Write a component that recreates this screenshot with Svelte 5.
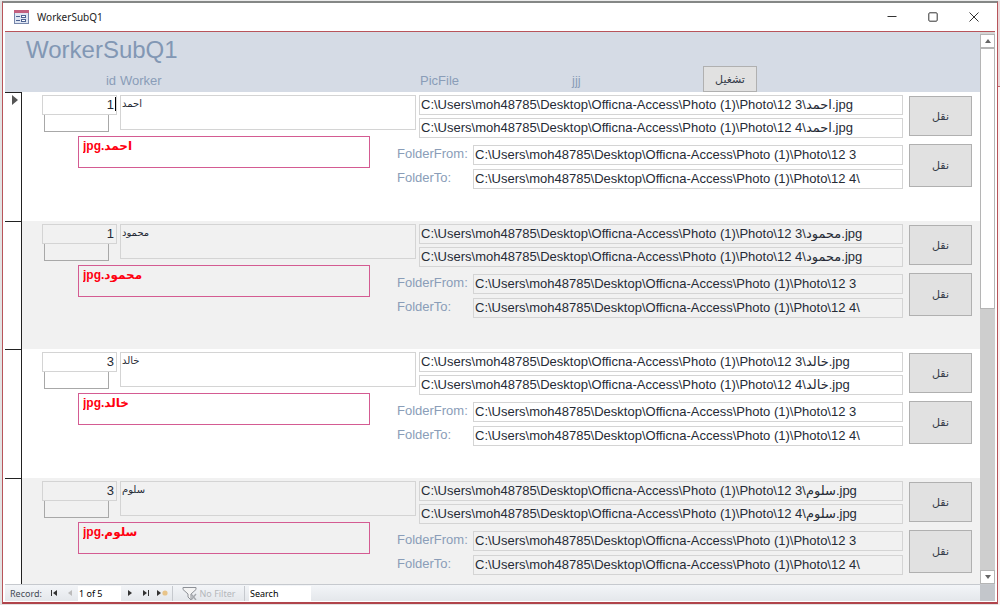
<script lang="ts">
interface WorkerRow {
  id: number;
  worker: string;
}

const base = "C:\\Users\\moh48785\\Desktop\\Officna-Access\\Photo (1)\\Photo\\";
const from = base + "12 3";
const to = base + "12 4\\";

const rows: WorkerRow[] = [
  { id: 1, worker: "احمد" },
  { id: 1, worker: "محمود" },
  { id: 3, worker: "خالد" },
  { id: 3, worker: "سلوم" },
];

let current = $state(0);
</script>

<div class="desktop">
  <main class="window">
    <div class="titlebar">
      <svg class="form-icon" viewBox="0 0 15 14" aria-hidden="true">
        <rect x="0.5" y="0.5" width="14" height="13" fill="#dfe6f3" stroke="#7787ab" />
        <rect x="0" y="0" width="15" height="3" fill="#c2607f" />
        <path d="M2 6.5h4M2 10.5h4" stroke="#4d6291" />
        <rect x="7.5" y="5.5" width="4" height="2" fill="#fff" stroke="#4d6291" />
        <rect x="7.5" y="9.5" width="4" height="2" fill="#fff" stroke="#4d6291" />
      </svg>
      <span class="caption">WorkerSubQ1</span>
      <button class="win" aria-label="Minimize">
        <svg viewBox="0 0 10 10"><path d="M0.5 4.5h9" /></svg>
      </button>
      <button class="win" aria-label="Maximize">
        <svg viewBox="0 0 10 10"><rect x="0.8" y="0.8" width="8.4" height="8.4" rx="1" /></svg>
      </button>
      <button class="win" aria-label="Close">
        <svg viewBox="0 0 10 10"><path d="M0.5 0.5l9 9M9.5 0.5l-9 9" /></svg>
      </button>
    </div>

    <div class="view">
      <div class="form">
        <header>
          <h1>WorkerSubQ1</h1>
          <div class="heads">
            <span class="h-id">id</span>
            <span class="h-worker">Worker</span>
            <span class="h-pic">PicFile</span>
            <span class="h-jjj">jjj</span>
            <button class="cmd run">تشغيل</button>
          </div>
        </header>

        <div class="records">
          {#each rows as row, i}
            <section class="record" class:alt={i % 2 === 1}>
              <button class="selector" aria-label="Select record" onclick={() => (current = i)}>
                {#if current === i}
                  <svg viewBox="0 0 6 10"><path d="M0 0l6 5-6 5z" fill="#555" /></svg>
                {/if}
              </button>
              <div class="fields">
                <div class="ids">
                  <div class="id-box" class:caret={current === i}>
                    <input class="id" aria-label="id" value={row.id} />
                  </div>
                  <input class="blank" aria-label="jjj" />
                </div>
                <textarea class="worker" aria-label="Worker" value={row.worker}></textarea>
                <div class="paths">
                  <input aria-label="PicFile" value={`${from}\\${row.worker}.jpg`} />
                  <input aria-label="New PicFile" value={`${to}${row.worker}.jpg`} />
                </div>
                <input class="file" dir="rtl" aria-label="File name" value={`${row.worker}.jpg`} />
                <div class="folders">
                  <label for={`from-${i}`}>FolderFrom:</label>
                  <input id={`from-${i}`} value={from} />
                  <label for={`to-${i}`}>FolderTo:</label>
                  <input id={`to-${i}`} value={to} />
                </div>
              </div>
              <div class="actions">
                <button class="cmd">نقل</button>
                <button class="cmd">نقل</button>
              </div>
            </section>
          {/each}
        </div>
      </div>

      <div class="scrollbar">
        <button aria-label="Scroll up"><svg viewBox="0 0 6 4"><path d="M0 4l3-4 3 4z" /></svg></button>
        <div class="track"><div class="thumb"></div></div>
        <button aria-label="Scroll down"><svg viewBox="0 0 6 4"><path d="M0 0l3 4 3-4z" /></svg></button>
      </div>
    </div>

    <footer>
      <label class="rec" for="recno">Record:</label>
      <button aria-label="First record"><svg viewBox="0 0 8 8"><path d="M1 1h1v6H1zM7 1v6L3 4z" /></svg></button>
      <button aria-label="Previous record" disabled><svg viewBox="0 0 8 8"><path d="M6 1v6L2 4z" /></svg></button>
      <input id="recno" class="recno" value="1 of 5" />
      <button class="next" aria-label="Next record"><svg viewBox="0 0 8 8"><path d="M2 1v6l4-3z" /></svg></button>
      <button aria-label="Last record"><svg viewBox="0 0 8 8"><path d="M1 1v6l4-3zM6 1h1v6H6z" /></svg></button>
      <button class="new" aria-label="New record">
        <svg viewBox="0 0 12 8"><path d="M1 1v6l4-3z" /><circle cx="9" cy="4" r="2.6" fill="#e8c48a" /></svg>
      </button>
      <button class="filter" disabled>
        <svg viewBox="0 0 15 13">
          <path d="M1 0.5h13v2L9 7v6L6 10V7L1 2.5z" fill="#f4f4f4" stroke="#8d9096" />
          <path d="M9 7l5 6M14 7l-5 6" stroke="#a5a8ad" stroke-width="1.4" />
        </svg>
        No Filter
      </button>
      <input class="search" aria-label="Search" value="Search" />
      <span class="corner"></span>
    </footer>
  </main>
</div>

<style>
  :global(body) { margin: 0; background: #e9eaea; }
  .desktop {
    box-sizing: border-box;
    height: 100vh;
    padding: 0 2px 1px;
    border-top: 1px solid #ececec;
    background: linear-gradient(#ead9da 85px, #c1676d 85px, #c1676d 86px, #faf3f3 86px) right / 2px 100% no-repeat #e3e3e3;
    font-family: "Liberation Sans", "DejaVu Sans", sans-serif;
    font-size: 13px;
    color: #262b36;
  }
  .window {
    box-sizing: border-box;
    height: 100%;
    display: flex;
    flex-direction: column;
    padding: 0 2px 1px;
    border: 1px solid #b8545a;
    border-top: 2px solid #858786;
    border-bottom: 2px solid #b0444b;
    background: #fff;
  }
  button, input, textarea {
    box-sizing: border-box;
    margin: 0;
    padding: 0;
    border: 0;
    border-radius: 0;
    outline: none;
    font: inherit;
    color: inherit;
    background: none;
  }
  svg { display: block; }

  .titlebar { display: flex; align-items: center; height: 28px; padding: 0 1px 0 9px; border-bottom: 1px solid #b8545a; }
  .form-icon { width: 15px; height: 14px; }
  .caption { flex: 1; padding-left: 8px; font-family: "Noto Sans", "Open Sans", sans-serif; font-size: 10px; color: #222; }
  .win { display: flex; justify-content: center; width: 41px; }
  .win svg { width: 10px; height: 10px; fill: none; stroke: #333; }

  .view { flex: 1; display: flex; min-height: 0; }
  .form { flex: 1; display: flex; flex-direction: column; min-width: 0; }
  header { height: 60px; flex: none; background: #d5dbe5; color: #8a9db8; }
  h1 { margin: 0; padding-left: 21px; font-size: 24px; line-height: 36px; height: 34px; font-weight: 400; color: #8297b4; }
  .heads { display: flex; align-items: center; padding-left: 37px; }
  .heads span { box-sizing: border-box; padding-top: 2px; }
  .h-id { width: 74px; text-align: right; }
  .h-worker { width: 304px; padding-left: 4px; }
  .h-pic { width: 152px; }
  .h-jjj { width: 131px; }
  .cmd { border: 1px solid #b0b0b0; background: #e1e1e1; color: #333a48; font-family: "DejaVu Sans", sans-serif; font-size: 11px; }
  .run { width: 54px; height: 26px; }

  .records { flex: 1; min-height: 0; overflow: hidden; }
  .record { display: flex; min-height: 129px; }
  .record.alt { min-height: 128px; background: #f1f1f1; }
  .selector {
    display: flex;
    justify-content: center;
    width: 17px;
    padding-top: 2px;
    padding-left: 3px;
    border-top: 1px solid #222;
    border-right: 1px solid #222;
    background: #fff;
  }
  .selector svg { width: 6px; height: 10px; }

  .fields {
    flex: 1;
    min-width: 0;
    display: grid;
    grid-template-columns: 78px 277px 22px 1fr;
    grid-template-rows: 41px 9px auto;
    align-items: start;
    padding: 3px 6px 0 20px;
  }
  .fields input, .fields textarea { display: block; border: 1px solid #d4d4d4; }
  .ids { grid-area: 1 / 1; }
  .id-box { position: relative; width: 75px; }
  .id-box.caret::after {
    content: "";
    position: absolute;
    top: 2px;
    right: 1px;
    width: 1px;
    height: 14px;
    background: #000;
  }
  .fields .id { width: 100%; height: 20px; padding: 0 2px 2px 0; text-align: right; }
  .fields .blank { width: 65px; height: 17px; margin-left: 2px; border-color: #a8a8a8; border-top: 0; }
  .fields .worker {
    grid-area: 1 / 2 / 2 / 4;
    width: 296px;
    height: 35px;
    padding: 1px;
    resize: none;
    overflow: hidden;
    font-family: "DejaVu Sans", sans-serif;
    font-size: 10px;
    line-height: 14px;
  }
  .paths { grid-area: 1 / 4 / 3 / 5; display: grid; gap: 3px; }
  .paths input, .folders input { width: 100%; height: 20px; padding: 0 0 2px 1px; }
  .fields .file {
    grid-area: 2 / 1 / 4 / 3;
    width: 292px;
    height: 32px;
    margin-left: 36px;
    padding: 0 4px 12px;
    border-color: #d45b92;
    text-align: left;
    font-size: 12px;
    font-weight: 700;
    color: #ff0010;
  }
  .folders {
    grid-area: 3 / 3 / 4 / 5;
    display: grid;
    grid-template-columns: 76px 1fr;
    row-gap: 4px;
    color: #8a9db8;
  }
  .folders label { line-height: 18px; }
  .folders input { color: #262b36; }

  .actions { display: flex; flex-direction: column; gap: 8px; padding: 4px 8px 0 0; }
  .actions .cmd { width: 63px; height: 40px; }
  .actions .cmd:last-child { height: 43px; }

  .scrollbar { display: flex; flex-direction: column; width: 15px; padding-top: 2px; background: #d5d5d5; }
  .scrollbar button { box-sizing: border-box; display: flex; justify-content: center; align-items: center; height: 14px; border: 1px solid #b5b5b5; background: #fff; }
  .scrollbar svg { width: 6px; height: 4px; fill: #666; }
  .track { flex: 1; background: #cecece; }
  .thumb { box-sizing: border-box; height: 50%; border: 1px solid #b5b5b5; background: #fff; }

  footer {
    display: flex;
    align-items: center;
    height: 16px;
    border-top: 1px solid #c6c9ce;
    background: linear-gradient(#f3f5f8, #e4e7eb);
    font-family: "Noto Sans", "Open Sans", sans-serif;
    font-size: 9px;
    color: #444a55;
  }
  footer button { display: flex; justify-content: center; width: 16px; }
  footer button svg { width: 8px; height: 8px; fill: #333; }
  footer button:disabled svg { fill: #bbb; }
  .rec { width: 36px; padding-left: 5px; }
  footer input { height: 15px; padding-left: 1px; background: #fff; color: #000; }
  .recno { width: 43px; }
  footer .next { margin-left: 1px; }
  footer .new svg { width: 12px; }
  footer .filter {
    align-items: center;
    gap: 3px;
    width: 73px;
    height: 15px;
    margin-left: 2px;
    border: solid #c6c9ce;
    border-width: 0 1px;
    color: #b4b7bb;
    white-space: nowrap;
  }
  footer .filter svg { width: 15px; height: 13px; }
  .search { width: 62px; margin-left: 4px; }
  .corner { align-self: stretch; width: 15px; margin-left: auto; background: #c3c6cb; }
</style>
